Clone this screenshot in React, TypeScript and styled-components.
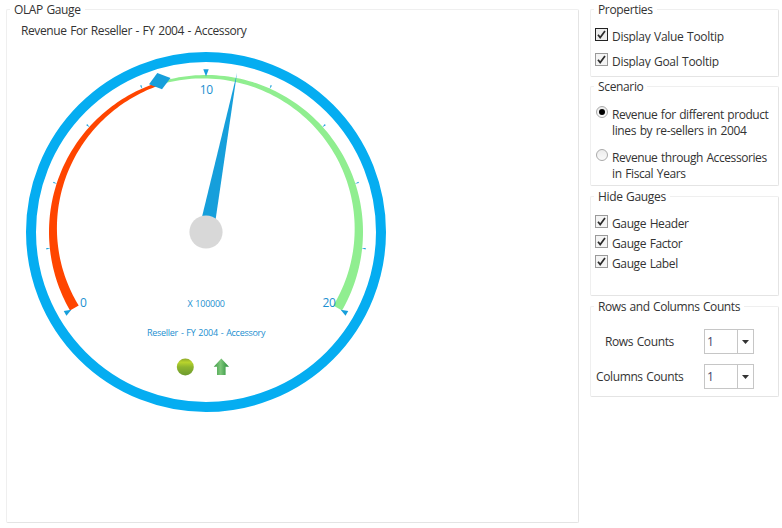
import React from "react";
import styled, { createGlobalStyle } from "styled-components";

const Global = createGlobalStyle`
  *, *::before, *::after { box-sizing: border-box; }
  body { margin: 0; background: #fff; }
`;

const Page = styled.main`
  display: flex;
  gap: 11px;
  width: 782px;
  height: 528px;
  padding: 9px 3px 5px 6px;
  overflow: hidden;
  font: 12px/16px "Open Sans", "Noto Sans", sans-serif;
  word-spacing: 0.8px;
  color: #333;
`;

const Group = styled.section<{ $h: number; $w: number; $mb?: number }>`
  width: ${(p) => p.$w}px;
  height: ${(p) => p.$h}px;
  margin-bottom: ${(p) => p.$mb ?? 0}px;
  border: 1px solid #efefef;
  border-right-color: #e4e4e4;
  border-bottom-color: #e4e4e4;
  border-radius: 2px;
`;

const Legend = styled.h2<{ $ls?: number }>`
  width: fit-content;
  height: 16px;
  margin: -8px 0 0 3px;
  padding: 0 4px;
  background: #fff;
  font: inherit;
  letter-spacing: ${(p) => p.$ls ?? -0.35}px;
  white-space: nowrap;
`;

const Sidebar = styled.aside`
  display: flex;
  flex-direction: column;
`;

const Label = styled.span<{ $ls?: number; $clip?: boolean }>`
  display: block;
  height: ${(p) => (p.$clip ? "14px" : "auto")};
  overflow: ${(p) => (p.$clip ? "hidden" : "visible")};
  letter-spacing: ${(p) => p.$ls ?? -0.38}px;
  white-space: nowrap;
`;

const GaugeTitle = styled.h3<{ $ls: number }>`
  margin: 5px 0 0 14px;
  height: 16px;
  font: inherit;
  letter-spacing: ${(p) => p.$ls}px;
`;

const GaugeSvg = styled.svg`
  display: block;
  margin: 13px 0 0 19px;
`;

const Choices = styled.div<{ $top: number; $gap: number }>`
  display: flex;
  flex-direction: column;
  gap: ${(p) => p.$gap}px;
  padding: ${(p) => p.$top}px 0 0 4px;
`;

const Choice = styled.label`
  display: flex;
  align-items: flex-start;
  gap: 4px;
`;

const Box = styled.span<{ $active?: boolean }>`
  flex: none;
  width: 13px;
  height: 13px;
  border: 1px solid ${(p) => (p.$active ? "#222" : "#9a9a9a")};
  background: ${(p) => (p.$active ? "#ececec" : "#f4f4f4")};
  svg { display: block; }
`;

const Radio = styled.span<{ $on?: boolean }>`
  flex: none;
  display: grid;
  place-items: center;
  width: 12px;
  height: 12px;
  margin: 0 0 0 1px;
  border: 1px solid #aaa;
  border-radius: 50%;
  background: linear-gradient(#ececec, #fafafa);
  &::after {
    content: "";
    width: 6px;
    height: 6px;
    border-radius: 50%;
    background: ${(p) => (p.$on ? "#000" : "transparent")};
  }
`;

const LabelWrap = styled.div<{ $top: number }>`
  padding-top: ${(p) => p.$top}px;
`;

const Counts = styled.div`
  display: flex;
  flex-direction: column;
  gap: 10px;
  padding-top: 14px;
`;

const CountRow = styled.div<{ $indent: number }>`
  display: flex;
  align-items: center;
  justify-content: space-between;
  height: 25px;
  padding: 0 24px 0 ${(p) => p.$indent}px;
`;

const Combo = styled.div`
  display: grid;
  grid-template-columns: 33px 1fr;
  width: 50px;
  height: 25px;
  border: 1px solid #c6c6c6;
`;

const ComboValue = styled.span`
  padding-left: 2px;
  border-right: 1px solid #c6c6c6;
  color: #44446a;
  line-height: 23px;
`;

const ComboArrow = styled.svg`
  align-self: center;
  justify-self: center;
`;

const CX = 206;
const CY = 232;
const OUTER = 157;

const polar = (deg: number, r: number) => {
  const a = (deg * Math.PI) / 180;
  return `${(CX + r * Math.sin(a)).toFixed(2)},${(CY - r * Math.cos(a)).toFixed(2)}`;
};

/** A band hugging the outer radius whose thickness changes linearly along its sweep. */
function taperedBand(from: number, to: number, w0: number, w1: number) {
  const outer: string[] = [];
  const inner: string[] = [];
  const steps = 90;
  for (let i = 0; i <= steps; i++) {
    const t = i / steps;
    const deg = from + (to - from) * t;
    outer.push(polar(deg, OUTER));
    inner.unshift(polar(deg, OUTER - (w0 + (w1 - w0) * t)));
  }
  return [...outer, ...inner].join(" ");
}

const MINOR = [-96, -72, -48, -24, 24, 48, 72, 96];
const MAJOR = [-120, 0, 120];

function Gauge() {
  return (
    <GaugeSvg width="360" height="360" viewBox="26 52 360 360" fontFamily='"Open Sans", "Noto Sans", sans-serif' fill="#1c8fd0">
      <defs>
        <linearGradient id="ball" x1="0" y1="0" x2="0" y2="1">
          <stop offset="0" stopColor="#8ea82c" />
          <stop offset="0.22" stopColor="#b9d42c" />
          <stop offset="0.5" stopColor="#8eb52e" />
          <stop offset="1" stopColor="#6c9a2e" />
        </linearGradient>
        <linearGradient id="arrow" x1="0" y1="0" x2="1" y2="0">
          <stop offset="0" stopColor="#3f9a45" />
          <stop offset="0.45" stopColor="#7dc67a" />
          <stop offset="1" stopColor="#238a35" />
        </linearGradient>
      </defs>
      <circle cx={CX} cy={CY} r="175" fill="none" stroke="#05adf1" strokeWidth="10" />
      <polygon points={taperedBand(-120, -16, 10, 3)} fill="#ff4500" />
      <polygon points={taperedBand(-16, 120, 2.6, 10)} fill="#90ee90" />
      {MINOR.map((d) => (
        <polygon key={d} points={`${polar(d - 0.25, 160.5)} ${polar(d + 0.25, 160.5)} ${polar(d, 156.5)}`} fill="#169fdb" />
      ))}
      {MAJOR.map((d) => (
        <polygon key={d} points={`${polar(d - 0.95, 162.7)} ${polar(d + 0.95, 162.7)} ${polar(d, 155.5)}`} fill="#169fdb" />
      ))}
      <polygon points="157.3,73 170.5,78 162,89.3 149,84.2" fill="#169fdb" />
      <polygon points="237,73 200,225 214.8,225" fill="#169fdb" />
      <circle cx={CX} cy={CY} r="16.6" fill="#d8d8d8" />
      <text x="199.7" y="94" fontSize="12" textLength="13.3">10</text>
      <text x="80" y="307" fontSize="12" textLength="6.5">0</text>
      <text x="322.5" y="307" fontSize="12" textLength="13.3">20</text>
      <text x="187.5" y="307" fontSize="9" textLength="37.5">X 100000</text>
      <text x="147" y="336" fontSize="9" textLength="118.5">Reseller - FY 2004 - Accessory</text>
      <circle cx="185.3" cy="367" r="8.5" fill="url(#ball)" />
      <path d="M221.3 358.5 L229 366.8 H225.6 V375 H217 V366.8 H213.7 Z" fill="url(#arrow)" />
    </GaugeSvg>
  );
}

const Check = ({ active }: { active?: boolean }) => (
  <Box $active={active}>
    <svg width="11" height="11" viewBox="0 0 11 11" fill="none" stroke="#2a2a2a" strokeWidth="1.7">
      <path d="M2 5.8 L4.2 8.6 L9 2" />
    </svg>
  </Box>
);

export default function App() {
  return (
    <>
      <Global />
      <Page>
        <Group $w={573} $h={514}>
          <Legend $ls={-0.38}>OLAP Gauge</Legend>
          <GaugeTitle $ls={-0.39}>Revenue For Reseller - FY 2004 - Accessory</GaugeTitle>
          <Gauge />
        </Group>
        <Sidebar>
          <Group $w={189} $h={68} $mb={9}>
            <Legend>Properties</Legend>
            <Choices $top={10} $gap={10}>
              <Choice><Check active /><LabelWrap $top={1}><Label $clip $ls={-0.3}>Display Value Tooltip</Label></LabelWrap></Choice>
              <Choice><Check /><LabelWrap $top={1}><Label $clip $ls={-0.3}>Display Goal Tooltip</Label></LabelWrap></Choice>
            </Choices>
          </Group>
          <Group $w={189} $h={100} $mb={10}>
            <Legend>Scenario</Legend>
            <Choices $top={11} $gap={10}>
              <Choice><Radio $on /><LabelWrap $top={1}><Label $ls={-0.43}>Revenue for different product</Label><Label $ls={-0.36}>lines by re-sellers in 2004</Label></LabelWrap></Choice>
              <Choice><Radio /><LabelWrap $top={1}><Label $ls={-0.42}>Revenue through Accessories</Label><Label>in Fiscal Years</Label></LabelWrap></Choice>
            </Choices>
          </Group>
          <Group $w={189} $h={100} $mb={10}>
            <Legend>Hide Gauges</Legend>
            <Choices $top={10} $gap={3}>
              {["Gauge Header", "Gauge Factor", "Gauge Label"].map((t) => (
                <Choice key={t}><Check /><LabelWrap $top={1}><Label>{t}</Label></LabelWrap></Choice>
              ))}
            </Choices>
          </Group>
          <Group $w={189} $h={91}>
            <Legend $ls={-0.42}>Rows and Columns Counts</Legend>
            <Counts>
              {([["Rows Counts", 14], ["Columns Counts", 5]] as const).map(([t, indent]) => (
                <CountRow key={t} $indent={indent}>
                  <Label>{t}</Label>
                  <Combo>
                    <ComboValue>1</ComboValue>
                    <ComboArrow width="7" height="4" viewBox="0 0 7 4"><path d="M0 0H7L3.5 4Z" fill="#333" /></ComboArrow>
                  </Combo>
                </CountRow>
              ))}
            </Counts>
          </Group>
        </Sidebar>
      </Page>
    </>
  );
}
